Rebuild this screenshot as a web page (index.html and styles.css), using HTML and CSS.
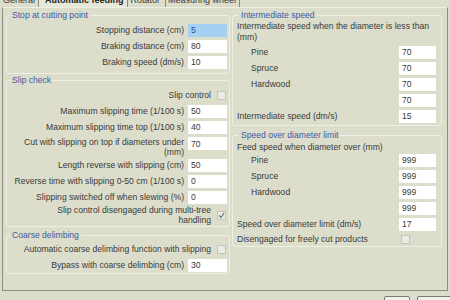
FILE: index.html
```html
<!DOCTYPE html>
<html lang="en">
<head>
    <meta charset="UTF-8">
    <title>Automatic feeding</title>
    <link rel="stylesheet" href="styles.css">
</head>
<body>
    <div class="tabs">
        <div class="tab">General</div>
        <div class="tab selected">Automatic feeding</div>
        <div class="tab">Rotator</div>
        <div class="tab">Measuring wheel</div>
    </div>

    <div class="page">
        <div class="column">
            <fieldset class="group g-stop">
                <legend>Stop at cutting point</legend>
                <div class="row"><span class="lbl">Stopping distance (cm)</span><input class="num active" value="5"></div>
                <div class="row"><span class="lbl">Braking distance (cm)</span><input class="num" value="80"></div>
                <div class="row"><span class="lbl">Braking speed (dm/s)</span><input class="num" value="10"></div>
            </fieldset>

            <fieldset class="group g-slip">
                <legend>Slip check</legend>
                <div class="row"><span class="lbl chk-lbl">Slip control</span><span class="check"></span></div>
                <div class="row"><span class="lbl">Maximum slipping time (1/100 s)</span><input class="num" value="50"></div>
                <div class="row"><span class="lbl">Maximum slipping time top (1/100 s)</span><input class="num" value="40"></div>
                <div class="row tall"><span class="lbl">Cut with slipping on top if diameters under (mm)</span><input class="num" value="70"></div>
                <div class="row"><span class="lbl">Length reverse with slipping (cm)</span><input class="num" value="50"></div>
                <div class="row"><span class="lbl">Reverse time with slipping 0-50 cm (1/100 s)</span><input class="num" value="0"></div>
                <div class="row"><span class="lbl">Slipping switched off when slewing (%)</span><input class="num" value="0"></div>
                <div class="row multi">
                    <span class="lbl chk-lbl narrow">Slip control disengaged during <span class="nowrap">multi-tree</span> handling</span>
                    <span class="check checked">
                        <svg width="7" height="7" viewBox="0 0 7 7"><path d="M1 3.5 L3 5.5 L6 1" fill="none" stroke="#777" stroke-width="1.3"/></svg>
                    </span>
                </div>
            </fieldset>

            <fieldset class="group g-coarse">
                <legend>Coarse delimbing</legend>
                <div class="row"><span class="lbl chk-lbl">Automatic coarse delimbing function with slipping</span><span class="check"></span></div>
                <div class="row"><span class="lbl">Bypass with coarse delimbing (cm)</span><input class="num" value="30"></div>
            </fieldset>
        </div>

        <div class="column">
            <fieldset class="group right g-inter">
                <legend>Intermediate speed</legend>
                <div class="desc">Intermediate speed when the diameter is less than (mm)</div>
                <div class="row"><span class="lbl indent">Pine</span><input class="num" value="70"></div>
                <div class="row"><span class="lbl indent">Spruce</span><input class="num" value="70"></div>
                <div class="row"><span class="lbl indent">Hardwood</span><input class="num" value="70"></div>
                <div class="row"><span class="lbl indent"></span><input class="num" value="70"></div>
                <div class="row"><span class="lbl">Intermediate speed (dm/s)</span><input class="num" value="15"></div>
            </fieldset>

            <fieldset class="group right g-limit">
                <legend>Speed over diameter limit</legend>
                <div class="desc">Feed speed when diameter over (mm)</div>
                <div class="row"><span class="lbl indent">Pine</span><input class="num" value="999"></div>
                <div class="row"><span class="lbl indent">Spruce</span><input class="num" value="999"></div>
                <div class="row"><span class="lbl indent">Hardwood</span><input class="num" value="999"></div>
                <div class="row"><span class="lbl indent"></span><input class="num" value="999"></div>
                <div class="row"><span class="lbl">Speed over diameter limit (dm/s)</span><input class="num" value="17"></div>
                <div class="row short"><span class="lbl">Disengaged for freely cut products</span><span class="check-slot"><span class="check"></span></span></div>
            </fieldset>
        </div>
    </div>

    <div class="footer">
        <div class="btn"></div>
        <div class="btn wide"></div>
    </div>
</body>
</html>
```
FILE: styles.css
```css
body {
    margin: 0;
    width: 450px;
    height: 300px;
    overflow: hidden;
    background-color: #dcdecb;
    font-family: "Liberation Sans", Arial, sans-serif;
    font-size: 8.6px;
    color: #3a3a3a;
}
.tabs {
    display: flex;
    height: 7px;
    overflow: hidden;
    padding-left: 1px;
}
.tab {
    font-size: 9px;
    line-height: 11px;
    margin-top: -5px;
    padding: 0 3px 0 2px;
    border-right: 1px solid #8a8a80;
}
.tab.selected {
    font-weight: bold;
    color: #222;
    background-color: #e6e8d8;
    padding: 0 3px 0 6px;
}
.tab:nth-child(3) {
    padding: 0 5px 0 3px;
}
.page {
    margin-left: 2px;
    width: 446px;
    height: 284px;
    box-sizing: border-box;
    border: 1px solid #8c8c84;
    border-top-color: #eef0e4;
    display: grid;
    grid-template-columns: 224px 210px;
    column-gap: 2px;
    padding: 2px 3px 0 3px;
}
.column {
    display: flex;
    flex-direction: column;
}
.group {
    margin: 0;
    min-width: 0;
    border: 1px solid #eef0e3;
    border-radius: 3px;
    padding: 2px 2px 3px 1px;
}
.group legend {
    color: #3c5aa8;
    line-height: 10px;
    padding: 0 2px;
    margin-left: 2px;
}
.g-slip {
    margin-top: 1px;
    padding-bottom: 1px;
}
.g-coarse {
    margin-top: 3px;
    padding-top: 1px;
    padding-bottom: 0;
}
.row {
    display: flex;
    align-items: center;
    height: 16px;
}
.lbl {
    flex: 1;
    text-align: right;
    padding-right: 4px;
    line-height: 10px;
}
.chk-lbl {
    padding-right: 6px;
}
.nowrap {
    white-space: nowrap;
}
.row.tall {
    height: 22px;
    align-items: flex-start;
}
.row.tall .lbl {
    padding-top: 2px;
}
.row.tall .num {
    margin-top: 2px;
}
.row.multi {
    height: 20px;
}
.lbl.narrow {
    flex: none;
    width: 164px;
    margin-left: auto;
}
.num {
    width: 39px;
    height: 13px;
    box-sizing: border-box;
    border: none;
    background-color: #fff;
    font-family: "Liberation Sans", Arial, sans-serif;
    font-size: 8.6px;
    color: #3a3a3a;
    padding: 0 3px;
    margin: 0;
}
.num.active {
    background-color: #a6d0f2;
    color: #1f4f9c;
}
.check {
    width: 9px;
    height: 9px;
    box-sizing: border-box;
    border: 1px solid #c4c6bb;
    background-color: #ebebe6;
    margin-right: 1px;
    display: flex;
    align-items: center;
    justify-content: center;
}
.right {
    padding: 1px 5px 1px 4px;
}
.right .lbl {
    text-align: left;
}
.right .num {
    width: 37px;
}
.lbl.indent {
    padding-left: 14px;
}
.desc {
    line-height: 11px;
    margin-bottom: 1px;
}
.g-limit {
    margin-top: 4px;
    padding-top: 2px;
    padding-bottom: 0;
}
.g-limit .desc {
    line-height: 10px;
    margin-bottom: 0;
}
.row.short {
    height: 14px;
}
.check-slot {
    width: 37px;
    display: flex;
}
.check-slot .check {
    margin-left: 2px;
}
.footer {
    display: flex;
    justify-content: flex-end;
    gap: 7px;
    height: 9px;
    overflow: hidden;
    padding-top: 5px;
    box-sizing: border-box;
}
.btn {
    width: 26px;
    height: 20px;
    flex: none;
    box-sizing: border-box;
    border: 1px solid #7a7a70;
    border-radius: 2px;
    background-color: #f2f2ea;
}
.btn.wide {
    width: 36px;
    margin-right: -3px;
}
```
